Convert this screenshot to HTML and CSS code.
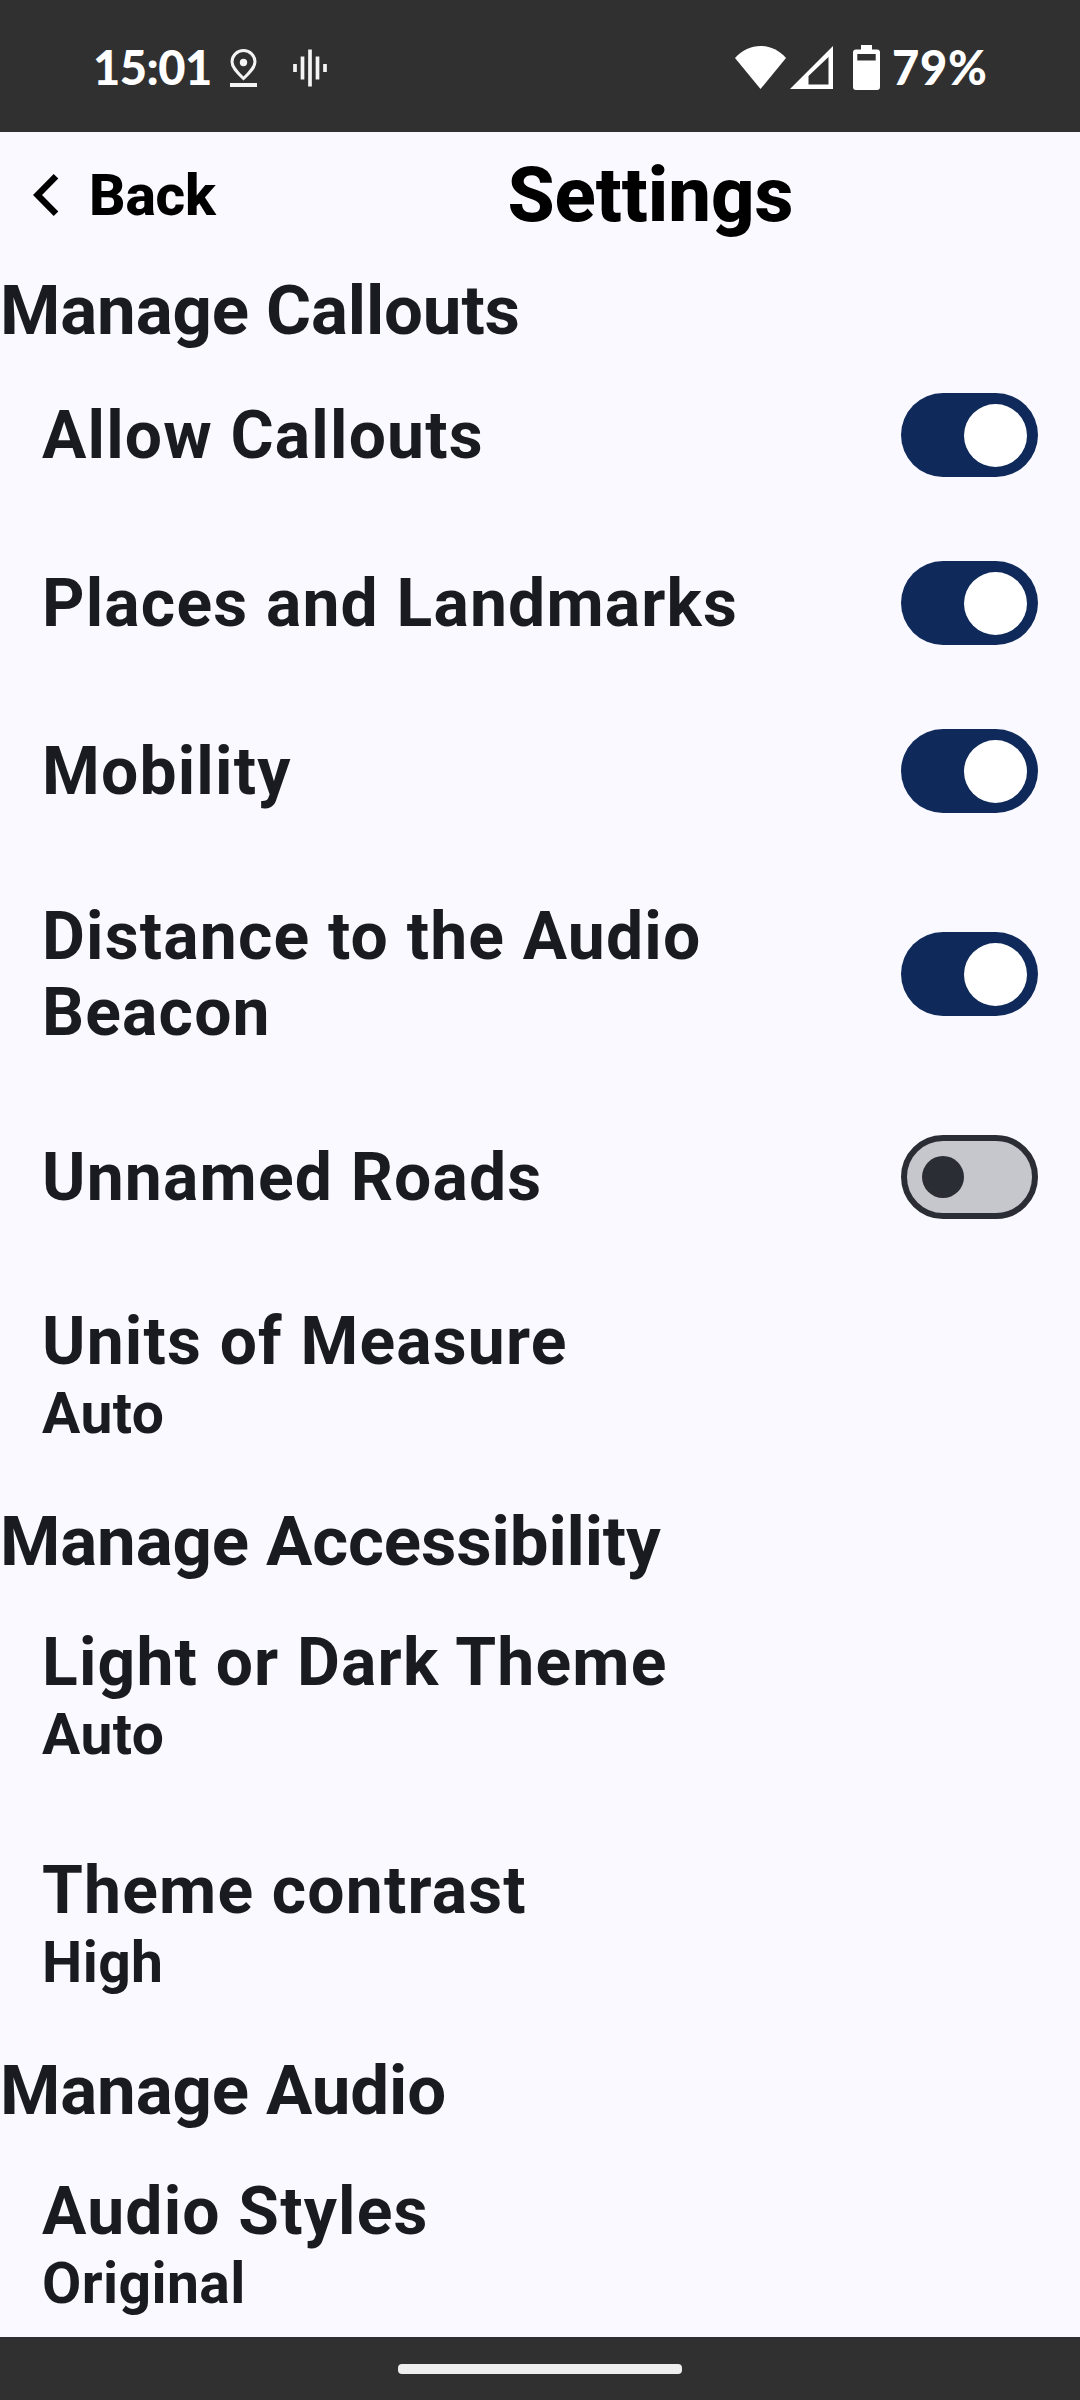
FILE: index.html
```html
<!DOCTYPE html>
<html lang="en">
<head>
<meta charset="utf-8">
<title>Settings</title>
<link rel="stylesheet" href="styles.css">
</head>
<body>
<header class="status">
  <div class="status-left">
    <span class="clock">15:01</span>
    <svg class="pin" width="27" height="38" viewBox="0 0 27 38" fill="none" stroke="#f4f4f4" stroke-width="3"><path d="M13.500 29.500C6 22.500 2 18 2 12.800a11.500 11.300 0 0 1 23 0c0 5.200-4 9.700-11.500 16.700z"/><circle cx="13.500" cy="13.500" r="3.700" fill="#f4f4f4" stroke="none"/><path d="M0 36h27" stroke-width="4"/></svg>
    <svg class="wave" width="34" height="38" viewBox="0 0 34 38" stroke="#f4f4f4" stroke-width="3.700"><path d="M2 15v8M9.500 7.500v23M17 .5v37M24.500 7.500v23M32 15v8"/></svg>
  </div>
  <div class="status-right">
    <svg width="51" height="43" viewBox="0 0 51 43" fill="#fff"><path d="M0 12C14-4 37-4 51 12L25.500 43z"/></svg>
    <svg class="cell" width="43" height="43" viewBox="0 0 43 43" fill="#fff"><path fill-rule="evenodd" d="M43 0v43H0zM38.500 11L18.500 30v8.500h20z"/></svg>
    <svg class="battery" width="27" height="45" viewBox="0 0 27 45" fill="#fff"><path fill-rule="evenodd" d="M8 0h11v4.500h5q3 0 3 3V42q0 3-3 3H3q-3 0-3-3V7.500q0-3 3-3h5zM4.300 9v6.500h18.400V9z"/></svg>
    <span class="percent">79%</span>
  </div>
</header>
<main class="screen">
  <div class="topbar">
    <div class="back"><svg width="26" height="42" viewBox="0 0 26 42" fill="none" stroke="#000" stroke-width="6.500"><path d="M23 2.300L4.500 21 23 39.700"/></svg><span>Back</span></div>
    <h1 class="title">Settings</h1>
  </div>
  <h2 class="section">Manage Callouts</h2>
  <div class="row switch-row"><span class="label">Allow Callouts</span><span class="switch on"></span></div>
  <div class="row switch-row"><span class="label">Places and Landmarks</span><span class="switch on"></span></div>
  <div class="row switch-row"><span class="label">Mobility</span><span class="switch on"></span></div>
  <div class="row switch-row tall"><span class="label">Distance to the Audio Beacon</span><span class="switch on"></span></div>
  <div class="row switch-row"><span class="label">Unnamed Roads</span><span class="switch off"></span></div>
  <div class="row choice"><span class="label">Units of Measure</span><span class="value">Auto</span></div>
  <h2 class="section">Manage Accessibility</h2>
  <div class="row choice"><span class="label">Light or Dark Theme</span><span class="value">Auto</span></div>
  <div class="row choice"><span class="label">Theme contrast</span><span class="value">High</span></div>
  <h2 class="section">Manage Audio</h2>
  <div class="row choice"><span class="label">Audio Styles</span><span class="value">Original</span></div>
</main>
<footer class="navbar"><span class="handle"></span></footer>
</body>
</html>
```

FILE: styles.css
```css
* { box-sizing: border-box; }
body { margin: 0; width: 1080px; height: 2400px; display: flex; flex-direction: column; background: #f9f9ff; color: #1a1b20; font-family: Roboto, sans-serif; overflow: hidden; }
svg { display: block; flex: none; }
.status { height: 132px; flex: none; background: #303030; display: flex; justify-content: space-between; align-items: center; padding: 3px 93px 0; color: #fff; font-family: Lato, sans-serif; font-weight: 900; font-size: 47px; }
.status-left, .status-right { display: flex; align-items: center; }
.clock, .percent { padding-bottom: 2px; }
.clock { width: 120px; letter-spacing: -0.5px; }
.pin { margin-left: 17px; }
.wave { margin-left: 36px; }
.cell { margin-left: 4px; }
.battery { margin: 0 12px 0 20px; }
.percent { width: 95px; letter-spacing: 0.8px; white-space: nowrap; }
.screen { flex: 1; min-height: 0; overflow: hidden; }
.topbar { height: 126px; display: grid; grid-template-columns: 221px 1fr; align-items: center; color: #000; }
.back { display: flex; align-items: center; gap: 30px; padding-left: 33px; font-size: 57px; font-weight: 800; letter-spacing: -0.2px; }
.title { margin: 0; text-align: center; font-size: 76px; font-weight: 800; }
.section { margin: 0; height: 93px; font-size: 69px; line-height: 105px; font-weight: 700; letter-spacing: -0.12px; white-space: nowrap; }
.row { padding: 0 42px; }
.label { font-size: 66px; line-height: 76px; font-weight: 700; letter-spacing: 1.18px; }
.switch-row { height: 168px; display: flex; align-items: center; justify-content: space-between; }
.switch-row .label { padding-top: 2px; }
.tall { height: 238px; }
.tall .label { width: 720px; }
.switch { width: 137px; height: 84px; border-radius: 42px; display: flex; align-items: center; flex: none; }
.switch::before { content: ""; border-radius: 50%; }
.on { background: #0f2a5a; padding-left: 63px; }
.on::before { width: 63px; height: 63px; background: #fff; }
.off { background: #c6c7cc; border: 6px solid #2a2d34; padding-left: 15px; }
.off::before { width: 42px; height: 42px; background: #2a2d34; }
.choice { height: 228px; padding-top: 2px; display: flex; flex-direction: column; justify-content: center; }
.value { font-size: 57px; line-height: 68px; font-weight: 700; letter-spacing: 0.4px; }
.navbar { height: 63px; flex: none; background: #303030; display: flex; align-items: center; justify-content: center; }
.handle { width: 284px; height: 10px; border-radius: 4px; background: #eee; }
```
